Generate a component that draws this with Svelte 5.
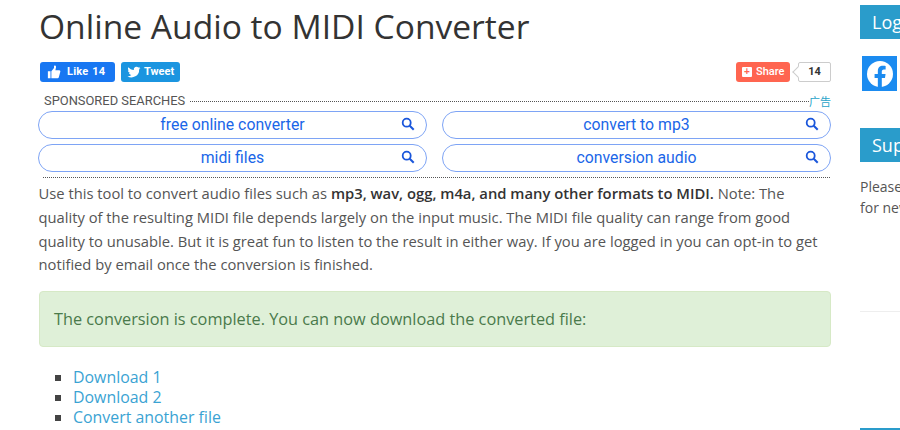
<script>
  const ads = ['free online converter', 'convert to mp3', 'midi files', 'conversion audio'];
</script>

<div class="page">
  <main class="main">
    <h1>Online Audio to MIDI Converter</h1>
    <div class="social">
      <div class="social-left">
        <span class="sbtn like">
          <svg viewBox="0 0 16 16" width="14" height="14"><path fill="#fff" d="M1 7h3v8H1zM5 7l3-3.5V1c0-.6 1.1-.8 1.8-.2.7.7.7 2 .2 3.200L9.600 6H14c1 0 1.500 1 1.200 1.800l-1.700 6.200c-.2.600-.7 1-1.300 1H5z"/></svg>
          <span>Like 14</span>
        </span>
        <span class="sbtn tweet">
          <svg viewBox="0 0 24 24" width="14" height="14"><path fill="#fff" d="M23 5c-.8.4-1.700.6-2.600.7.900-.6 1.600-1.400 2-2.500-.9.500-1.900.9-2.900 1.100A4.600 4.600 0 0 0 11.700 8.500C7.900 8.300 4.500 6.500 2.300 3.700c-1.200 2.100-.6 4.800 1.400 6.100-.7 0-1.400-.2-2.100-.6 0 2.200 1.600 4.100 3.700 4.600-.7.200-1.400.2-2.100.1.600 1.900 2.300 3.200 4.300 3.200A9.300 9.300 0 0 1 .7 19.100 13 13 0 0 0 20.800 7.500c.9-.6 1.600-1.400 2.200-2.500z"/></svg>
          <span>Tweet</span>
        </span>
      </div>
      <div class="social-right">
        <span class="sbtn share">
          <span class="plus">+</span>
          <span>Share</span>
        </span>
        <span class="count">14</span>
      </div>
    </div>

    <section class="ads">
      <div class="ads-head">
        <span class="ads-title">SPONSORED SEARCHES</span>
        <span class="dots"></span>
        <span class="ads-mark">广告</span>
      </div>
      <div class="ads-grid">
        {#each ads as ad}
          <a class="ad" href="#top">
            <span class="ad-text">{ad}</span>
            <svg class="lens" viewBox="0 0 14 14" width="14" height="14"><circle cx="5.700" cy="5.700" r="4" fill="none" stroke="#1a56db" stroke-width="1.800"/><path d="M8.700 8.700l4 4" stroke="#1a56db" stroke-width="2" fill="none"/></svg>
          </a>
        {/each}
      </div>
      <div class="ads-foot"></div>
    </section>

    <p class="intro">Use this tool to convert audio files such as <b>mp3, wav, ogg, m4a, and many other formats to MIDI.</b> Note: The quality of the resulting MIDI file depends largely on the input music. The MIDI file quality can range from good quality to unusable. But it is great fun to listen to the result in either way. If you are logged in you can opt-in to get notified by email once the conversion is finished.</p>

    <div class="alert">The conversion is complete. You can now download the converted file:</div>

    <ul class="links">
      <li><a href="#top">Download 1</a></li>
      <li><a href="#top">Download 2</a></li>
      <li><a href="#top">Convert another file</a></li>
    </ul>
  </main>

  <aside class="side">
    <div class="side-head first">Login</div>
    <div class="fb">
      <svg viewBox="0 0 36 36" width="26" height="26"><circle cx="18" cy="18" r="18" fill="#fff"/><path fill="#1b8bf0" d="M15 36V23.500h-4.500V18H15v-4c0-4.700 2.800-7.300 7-7.300 2 0 3.800.3 3.800.3v4.600h-2.300c-2.300 0-3 1.400-3 2.900V18h5.200l-.8 5.500h-4.400V36z"/></svg>
    </div>
    <div class="side-head second">Support</div>
    <p class="side-text">Please support us<br />for new features</p>
    <div class="rule"></div>
    <div class="bottom"></div>
  </aside>
</div>

<style>
  :global(body) {
    margin: 0;
    background: #fff;
    overflow: hidden;
  }
  .page {
    display: flex;
    width: 900px;
    height: 430px;
    overflow: hidden;
    padding-left: 39px;
    box-sizing: border-box;
    gap: 29px;
    font-family: "Open Sans", sans-serif;
    color: #555;
  }
  .main {
    flex: 0 0 792px;
    width: 792px;
  }
  h1 {
    margin: 0;
    padding-top: 5px;
    font-size: 33.600px;
    line-height: 42px;
    font-weight: 400;
    color: #333;
  }
  .social {
    display: flex;
    justify-content: space-between;
    margin-top: 15px;
    padding-left: 1px;
  }
  .social-left, .social-right {
    display: flex;
    align-items: center;
    gap: 6px;
  }
  .sbtn {
    display: inline-flex;
    align-items: center;
    height: 20px;
    border-radius: 3px;
    color: #fff;
    font: 700 11px/20px Roboto, sans-serif;
    gap: 4px;
    box-sizing: border-box;
  }
  .like { background: #1877f2; width: 75px; padding-left: 7px; gap: 6px; word-spacing: 1px; letter-spacing: .2px; }
  .tweet { background: #1b95e0; width: 59px; padding-left: 6px; gap: 3px; }
  .share {
    background: #ff6550;
    width: 54px;
    padding-left: 6px;
    font-weight: 500;
  }
  .plus {
    width: 10px;
    height: 10px;
    background: #fff;
    color: #ff6550;
    border-radius: 1px;
    font: 700 10px/10px "Liberation Sans", sans-serif;
    text-align: center;
  }
  .count {
    position: relative;
    width: 33px;
    height: 20px;
    box-sizing: border-box;
    margin-left: 2px;
    border: 1px solid #ccc;
    border-radius: 2px;
    color: #333;
    background: #fff;
    font: 700 11px/18px Roboto, sans-serif;
    text-align: center;
  }
  .count::before {
    content: "";
    position: absolute;
    left: -5px;
    top: 5px;
    width: 7px;
    height: 7px;
    background: #fff;
    border-left: 1px solid #ccc;
    border-bottom: 1px solid #ccc;
    transform: rotate(45deg);
  }
  .ads {
    margin-top: 11px;
  }
  .ads-head {
    display: flex;
    align-items: center;
    padding-left: 5px;
    height: 16px;
    font: 400 12.900px/16px Roboto, sans-serif;
    color: #555;
  }
  .dots {
    flex: 1;
    margin: 1px 0 0 5px;
    border-top: 1px dotted #555;
  }
  .ads-mark {
    color: #1fa3c9;
    font: 11px/16px "Noto Sans CJK SC", sans-serif;
  }
  .ads-grid {
    display: grid;
    grid-template-columns: 389px 389px;
    justify-content: space-between;
    row-gap: 5px;
    padding-top: 2px;
    margin-left: -1px;
    margin-right: 0;
  }
  .ad {
    position: relative;
    display: block;
    height: 28px;
    box-sizing: border-box;
    border: 1.500px solid #7ea4f5;
    border-radius: 14px;
    color: #1a66e8;
    text-decoration: none;
    text-align: center;
    font: 400 15.800px/25px Roboto, sans-serif;
  }
  .lens {
    position: absolute;
    right: 11px;
    top: 5px;
  }
  .ads-foot {
    margin: 5px 1px 0 4px;
    border-top: 1px dotted #555;
  }
  .intro {
    margin: 4px 0 0 -.5px;
    font-size: 14.750px;
    line-height: 23.800px;
    color: #555;
  }
  .intro b { color: #333; font-weight: 600; font-size: 14.800px; }
  .alert {
    margin-top: 14px;
    height: 56px;
    box-sizing: border-box;
    padding: 0 14px;
    background: #dff0d8;
    border: 1px solid #d6e9c6;
    border-radius: 4px;
    color: #4a7a4b;
    font-size: 16.300px;
    line-height: 54px;
  }
  .links {
    margin: 20px 0 0;
    padding: 0 0 0 34px;
    list-style: square;
    font-size: 15.900px;
    line-height: 20px;
    color: #444;
  }
  .links a {
    color: #3aa3d3;
    text-decoration: none;
  }
  .side {
    flex: 1;
    min-width: 0;
    overflow: hidden;
    white-space: nowrap;
  }
  .side-head {
    width: 120px;
    height: 34px;
    background: #2a9ccb;
    color: #fff;
    font-size: 18px;
    line-height: 34px;
    padding-left: 12px;
    box-sizing: border-box;
  }
  .first { margin-top: 5px; }
  .fb {
    width: 35px;
    height: 35px;
    margin: 17px 0 0 2px;
    background: #1b8bf0;
    display: flex;
    align-items: center;
    justify-content: center;
  }
  .second { margin-top: 37px; }
  .side-text {
    margin: 14px 0 0;
    font-size: 14px;
    line-height: 21px;
    color: #555;
  }
  .rule {
    margin-top: 93px;
    border-top: 1px solid #eee;
  }
  .bottom {
    margin-top: 116px;
    height: 3px;
    background: #2a9ccb;
  }
</style>
